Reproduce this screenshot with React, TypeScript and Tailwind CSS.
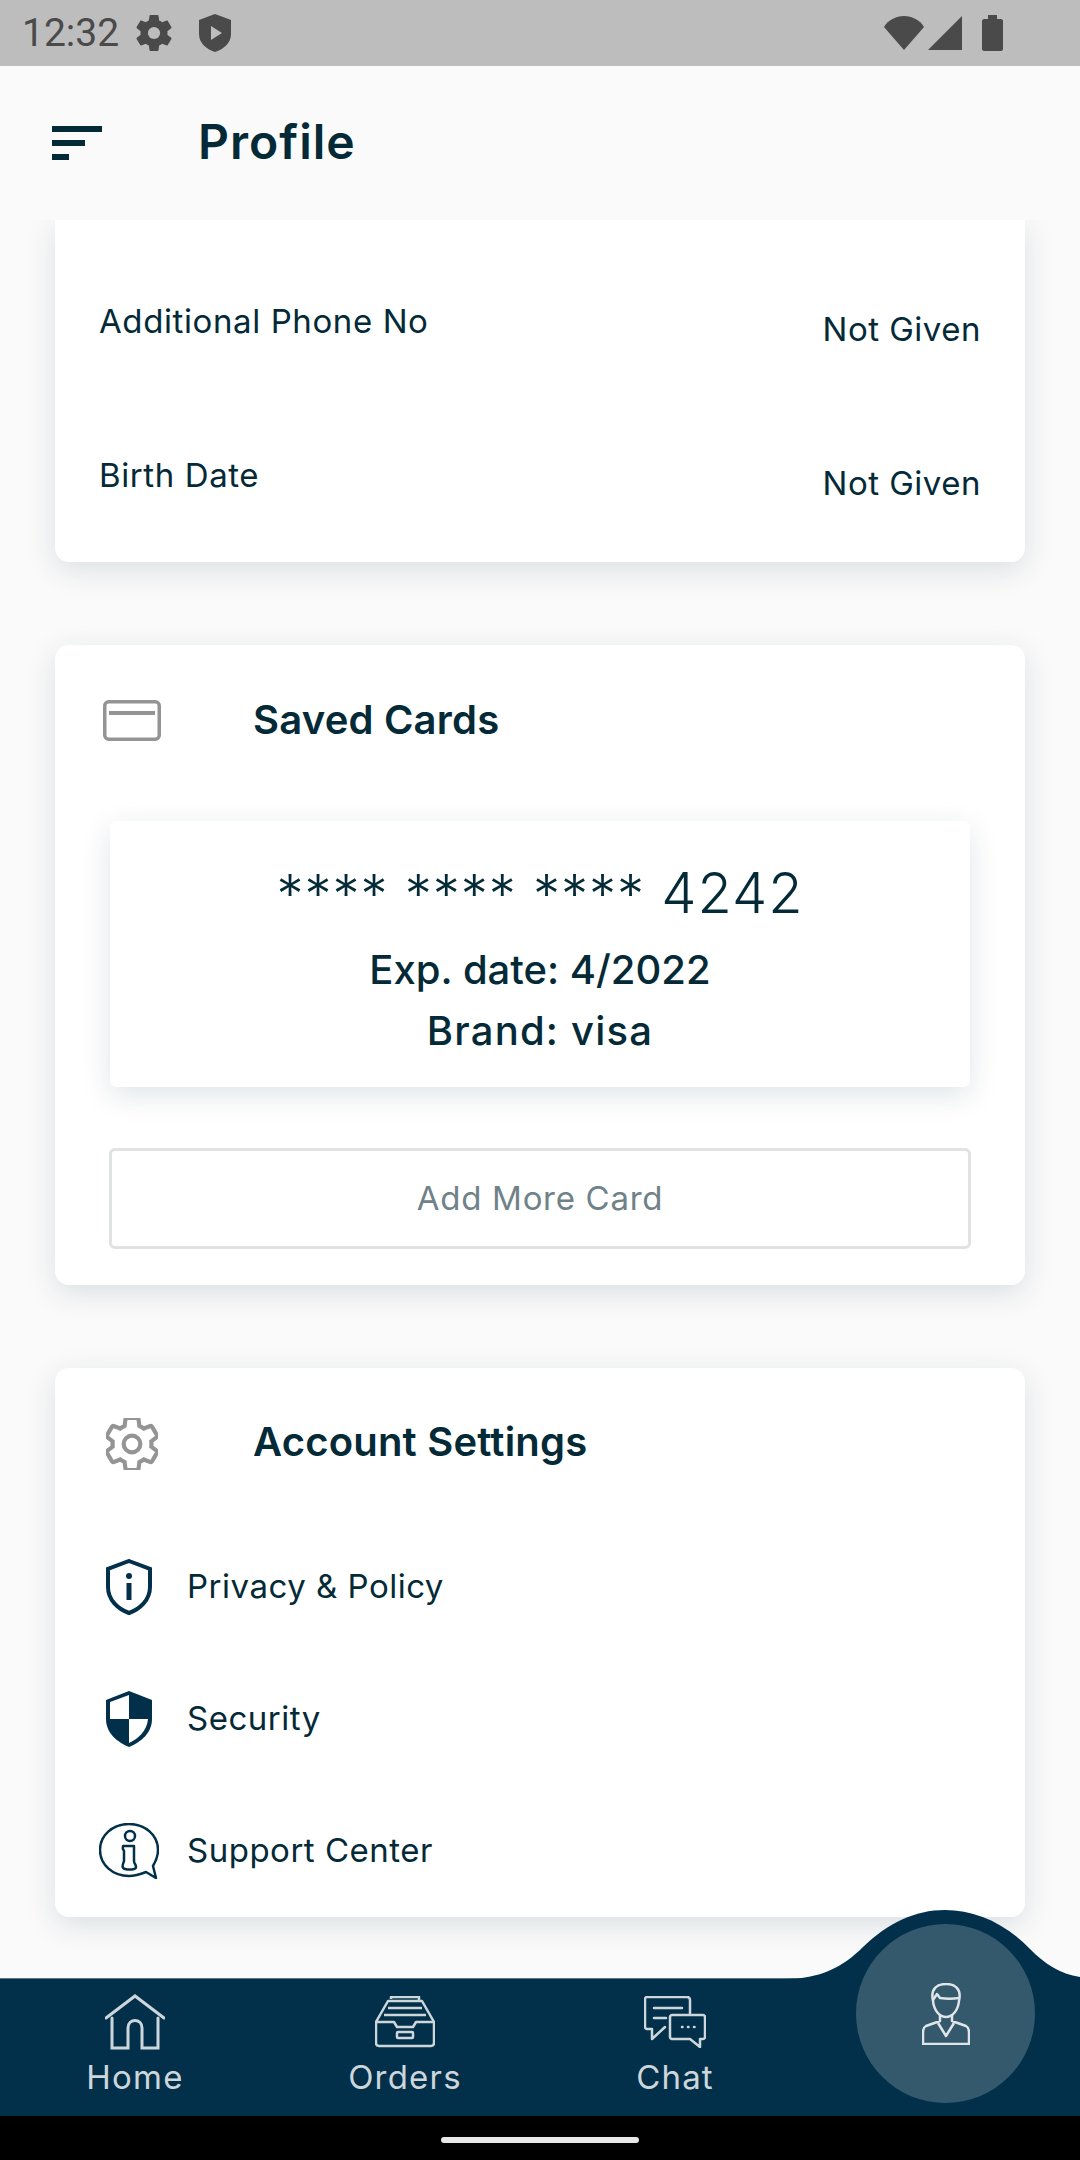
const GEAR =
  "M19.43 12.98c.04-.32.07-.64.07-.98 0-.34-.03-.66-.07-.98l2.11-1.65c.19-.15.24-.42.12-.64l-2-3.46c-.09-.16-.26-.25-.44-.25-.06 0-.12.01-.17.03l-2.49 1c-.52-.4-1.08-.73-1.69-.98l-.38-2.65C14.46 2.18 14.25 2 14 2h-4c-.25 0-.46.18-.49.42l-.38 2.65c-.61.25-1.17.59-1.69.98l-2.49-1c-.06-.02-.12-.03-.18-.03-.17 0-.34.09-.43.25l-2 3.46c-.13.22-.07.49.12.64l2.11 1.65c-.04.32-.07.65-.07.98 0 .33.03.66.07.98l-2.11 1.65c-.19.15-.24.42-.12.64l2 3.46c.09.16.26.25.44.25.06 0 .12-.01.17-.03l2.49-1c.52.4 1.08.73 1.69.98l.38 2.65c.03.24.24.42.49.42h4c.25 0 .46-.18.49-.42l.38-2.65c.61-.25 1.17-.59 1.69-.98l2.49 1c.06.02.12.03.18.03.17 0 .34-.09.43-.25l2-3.46c.12-.22.07-.49-.12-.64l-2.11-1.65z";

const cardShadow = "shadow-[0_8px_30px_rgba(0,48,73,0.13)]";

function StatusBar() {
  return (
    <div className="h-[66px] shrink-0 bg-[#bdbdbd] flex items-center justify-between pl-[22px] pr-[77px] text-[#4a4a4a]">
      <div className="flex items-center">
        <span className="font-['Roboto',sans-serif] text-[39px] leading-none">12:32</span>
        <svg viewBox="2 2 20 20" className="w-[36px] h-[36px] ml-[17px]" fill="#4a4a4a">
          <path d={GEAR} />
          <circle cx="12" cy="12" r="3.4" fill="#bdbdbd" />
        </svg>
        <svg viewBox="0 0 32 38" className="w-[32px] h-[38px] ml-[27px]">
          <path d="M16 0 L32 6 V20 C32 29 25 35 16 38 C7 35 0 29 0 20 V6Z" fill="#4a4a4a" />
          <path d="M12 12 L23 19 L12 26Z" fill="#bdbdbd" />
        </svg>
      </div>
      <div className="flex items-center">
        <svg viewBox="0 0 40 34" className="w-[40px] h-[34px]" fill="#4a4a4a">
          <path d="M20 34 L0 11 C4 4 12 0 20 0 C28 0 36 4 40 11Z" />
        </svg>
        <svg viewBox="0 0 34 34" className="w-[34px] h-[34px] ml-[4px]" fill="#4a4a4a">
          <path d="M34 0 V34 H0Z" />
        </svg>
        <svg viewBox="0 0 21 36" className="w-[21px] h-[36px] ml-[20px]" fill="#4a4a4a">
          <path d="M6 0 H15 V4 H19 C20 4 21 5 21 6 V34 C21 35 20 36 19 36 H2 C1 36 0 35 0 34 V6 C0 5 1 4 2 4 H6Z" />
        </svg>
      </div>
    </div>
  );
}

function Header() {
  return (
    <div className="h-[154px] shrink-0 bg-[#fafafa] flex items-center pl-[52px]">
      <div className="w-[146px] flex flex-col gap-[8px]">
        <div className="w-[50px] h-[6px] bg-[#042a37]" />
        <div className="w-[33px] h-[6px] bg-[#042a37]" />
        <div className="w-[17px] h-[6px] bg-[#042a37]" />
      </div>
      <h1 className="text-[48px] leading-[56px] mb-[2px] font-semibold text-[#042a37] tracking-[1px]">Profile</h1>
    </div>
  );
}

function InfoRow({ label, value }: { label: string; value: string }) {
  return (
    <div className="h-[154px] flex items-center justify-between">
      <span className="text-[33px] tracking-[0.6px]">{label}</span>
      <span className="text-[33px] tracking-[0.5px] mt-[16px]">{value}</span>
    </div>
  );
}

function CardHeader({ icon, title }: { icon: React.ReactNode; title: string }) {
  return (
    <div className="h-[56px] flex items-center pl-[44px]">
      <div className="w-[154px] flex items-center">{icon}</div>
      <h2 className="text-[40px] font-semibold tracking-[0.2px]">{title}</h2>
    </div>
  );
}

function SettingRow({ icon, label }: { icon: React.ReactNode; label: string }) {
  return (
    <div className="h-[132px] flex items-center pl-[44px]">
      <div className="w-[60px] flex justify-center">{icon}</div>
      <span className="ml-[28px] text-[33px] tracking-[0.5px]">{label}</span>
    </div>
  );
}

const navItems = [
  {
    label: "Home",
    icon: (
      <svg viewBox="0 0 60 56" className="w-[60px] h-[56px]" fill="none" stroke="#cdd6db" strokeWidth="3" strokeLinecap="round">
        <path d="M1 24 L30 2 L59 24" />
        <path d="M7 24 V54 H23 V34 C23 24 37 24 37 34 V54 H53 V24" />
      </svg>
    ),
  },
  {
    label: "Orders",
    icon: (
      <svg viewBox="0 0 60 52" className="w-[60px] h-[52px]" fill="none" stroke="#cdd6db" strokeWidth="2.5" strokeLinejoin="round">
        <path d="M1 26 H19 L22 31 H38 L41 26 H59 V47 C59 49 58 50 56 50 H4 C2 50 1 49 1 47Z" />
        <path d="M1 26 L13 5 H47 L59 26" />
        <path d="M9 19 H51 M13 12 H47 M16 3 V1 H44 V5" />
        <rect x="22" y="36" width="16" height="6" rx="1" />
      </svg>
    ),
  },
  {
    label: "Chat",
    icon: (
      <svg viewBox="0 0 62 52" className="w-[62px] h-[52px]" fill="none" stroke="#cdd6db" strokeWidth="2.5" strokeLinejoin="round" strokeLinecap="round">
        <path d="M46 18 V4 C46 2 45 1 43 1 H3 C2 1 1 2 1 3 V31 C1 32 2 33 3 33 H8 V43 L21 31" />
        <path d="M10 12 H38 M10 22 H22" />
        <path d="M28 19 H59 C60 19 61 20 61 21 V41 C61 42 60 43 59 43 H56 V51 L46 43 H28 C27 43 26 42 26 41 V21 C26 20 27 19 28 19Z" />
        <path d="M38 31 H38.5 M44 31 H44.5 M50 31 H50.5" />
      </svg>
    ),
  },
];

function BottomNav() {
  return (
    <div className="relative h-[138px] shrink-0 bg-[#02304a] border-t border-[#5c7686] flex">
      <svg viewBox="770 1900 310 85" className="absolute left-[770px] top-[-78px] w-[310px] h-[85px]" fill="#02304a">
        <path d="M785 1978 C820 1978 843 1966 863 1946 C888 1922 915 1909 945 1909 C975 1909 1005 1922 1030 1948 C1045 1963 1060 1973 1080 1976 V1985 H785Z" />
      </svg>
      {navItems.map((item) => (
        <div key={item.label} className="relative w-[270px] h-full flex flex-col items-center pt-[15px] text-[#cdd6db]">
          <div className="h-[56px] flex items-center">{item.icon}</div>
          <span className="mt-[8px] text-[33px] leading-[38px] tracking-[1.2px]">{item.label}</span>
        </div>
      ))}
      <div className="absolute left-[856px] top-[-55px] w-[179px] h-[179px] rounded-full bg-[#34596c] flex items-center justify-center">
        <svg viewBox="0 0 48 62" className="w-[48px] h-[62px]" fill="none" stroke="#dfe5e8" strokeWidth="2.5" strokeLinejoin="round">
          <path d="M11 18 C8 5 16 1 24 1 C32 1 40 5 37 18 C36 28 30 34 24 34 C18 34 12 28 11 18Z" />
          <path d="M11 17 L15 11 L18 15 C24 16 31 16 37 15" />
          <path d="M18 32 V38 L4 43 C2 44 1 47 1 50 V61 H47 V50 C47 47 46 44 44 43 L30 38 V32" />
          <path d="M16 40 L24 53 L32 40" />
        </svg>
      </div>
    </div>
  );
}

export default function App() {
  return (
    <div className="w-[1080px] h-[2160px] flex flex-col overflow-hidden bg-[#fafafa] font-['Inter',sans-serif] text-[#042a37]">
      <StatusBar />
      <Header />
      <main className="flex-1 min-h-0 px-[55px] overflow-hidden">
        <section className={`h-[342px] pt-[25px] px-[44px] bg-white rounded-b-[14px] ${cardShadow}`}>
          <InfoRow label="Additional Phone No" value="Not Given" />
          <InfoRow label="Birth Date" value="Not Given" />
        </section>

        <section className={`mt-[83px] h-[640px] bg-white rounded-[14px] pt-[47px] ${cardShadow}`}>
          <CardHeader
            title="Saved Cards"
            icon={
              <svg viewBox="0 0 58 41" className="w-[58px] h-[41px] ml-[4px]" fill="none" stroke="#949494" strokeWidth="3.5">
                <rect x="1.75" y="1.75" width="54.5" height="37.5" rx="4" />
                <path d="M6 13 H52" strokeWidth="4" />
              </svg>
            }
          />
          <div className={`mt-[73px] mx-[55px] h-[266px] rounded-[6px] bg-white flex flex-col items-center pt-[40px] ${cardShadow}`}>
            <div className="text-[54px] leading-[64px] font-light tracking-[1px]">
              **** **** **** <span className="text-[56px]">4242</span>
            </div>
            <div className="mt-[19px] text-[40px] leading-[50px] font-medium">Exp. date: 4/2022</div>
            <div className="mt-[11px] text-[40px] leading-[50px] font-medium tracking-[1.2px]">Brand: visa</div>
          </div>
          <button className="block mt-[61px] mx-[54px] w-[862px] h-[101px] rounded-[6px] border-[3px] border-[#e0e2e3] text-[33px] tracking-[0.7px] text-[#6f8288]">
            Add More Card
          </button>
        </section>

        <section className={`mt-[83px] h-[549px] bg-white rounded-[14px] pt-[46px] ${cardShadow}`}>
          <CardHeader
            title="Account Settings"
            icon={
              <svg viewBox="2 2 20 20" className="w-[52px] h-[52px] ml-[7px] mt-[3px]" fill="none" stroke="#949494" strokeWidth="1.6">
                <path d={GEAR} />
                <circle cx="12" cy="12" r="3.2" />
              </svg>
            }
          />
          <div className="mt-[51px]">
            <SettingRow
              label="Privacy & Policy"
              icon={
                <svg viewBox="0 0 46 56" className="w-[46px] h-[56px]" fill="none" stroke="#02304a" strokeWidth="4">
                  <path d="M23 2 L44 10 V28 C44 41 34 50 23 54 C12 50 2 41 2 28 V10Z" />
                  <circle cx="23" cy="17" r="3" fill="#02304a" stroke="none" />
                  <path d="M23 24 V41" strokeWidth="5" />
                </svg>
              }
            />
            <SettingRow
              label="Security"
              icon={
                <svg viewBox="0 0 46 56" className="w-[46px] h-[56px]" fill="#02304a">
                  <path d="M23 0 L46 9 V28 C46 42 35 51 23 56 C11 51 0 42 0 28 V9Z" />
                  <path d="M23 4 V28 H4 V11Z" fill="white" />
                  <path d="M23 28 H42 C41 40 32 48 23 52Z" fill="white" />
                </svg>
              }
            />
            <SettingRow
              label="Support Center"
              icon={
                <svg viewBox="0 0 60 56" className="w-[60px] h-[56px]" fill="none" stroke="#02304a" strokeWidth="2.5" strokeLinejoin="round">
                  <path d="M30 1 C14 1 1 12 1 27 C1 42 14 53 30 53 C37 53 42 51 47 49 L57 55 L54 43 C57 38 59 33 59 27 C59 12 46 1 30 1Z" />
                  <circle cx="31" cy="13" r="5" />
                  <path d="M24 23 H35 V38 C35 41 37 41 37 44 C37 47 30 47 26 46 C22 45 24 41 25 38 V28 C25 27 23 27 24 23Z" />
                </svg>
              }
            />
          </div>
        </section>
      </main>
      <BottomNav />
      <div className="h-[44px] shrink-0 bg-black flex justify-center pt-[21px]">
        <div className="w-[198px] h-[6px] rounded-full bg-[#e8e8e8]" />
      </div>
    </div>
  );
}
